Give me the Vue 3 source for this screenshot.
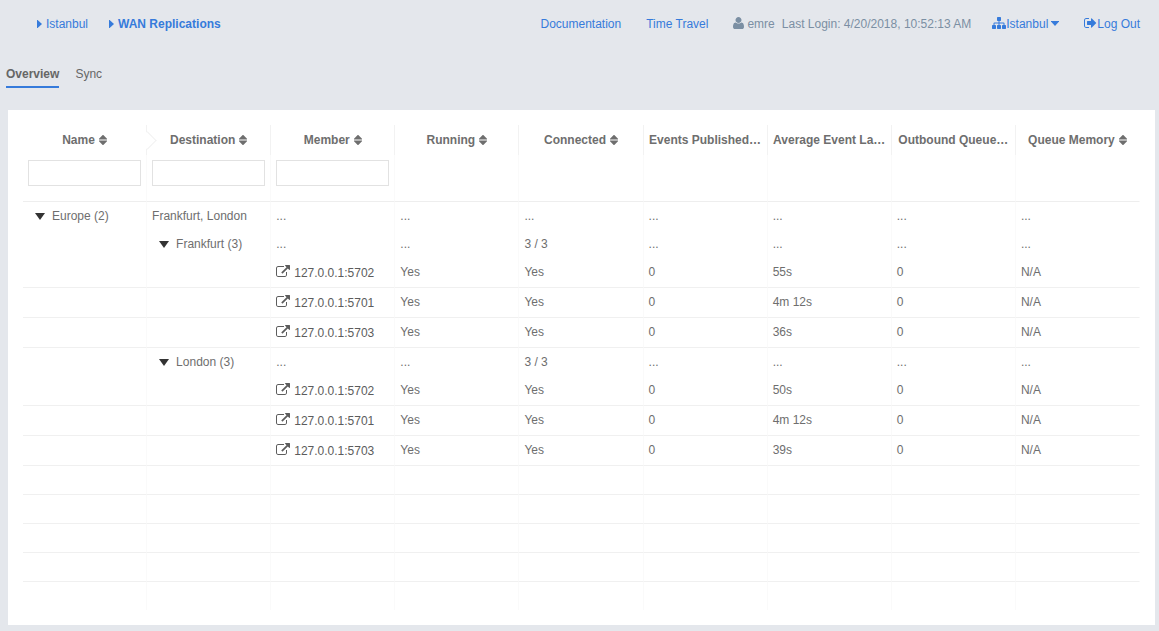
<script setup>
import { ref } from 'vue'

const columns = [
  { key: 'name', label: 'Name', sort: true, filter: true, pivot: true },
  { key: 'destination', label: 'Destination', sort: true, filter: true },
  { key: 'member', label: 'Member', sort: true, filter: true },
  { key: 'running', label: 'Running', sort: true },
  { key: 'connected', label: 'Connected', sort: true },
  { key: 'events', label: 'Events Published…' },
  { key: 'latency', label: 'Average Event La…' },
  { key: 'queue', label: 'Outbound Queue…' },
  { key: 'memory', label: 'Queue Memory', sort: true }
]

const filters = ref({ name: '', destination: '', member: '' })

const dots = '...'
const group = (destination) => ({
  kind: 'group',
  expand: 'destination',
  cells: ['', destination, dots, dots, '3 / 3', dots, dots, dots, dots]
})
const leaf = (member, latency) => ({
  kind: 'leaf',
  cells: ['', '', member, 'Yes', 'Yes', '0', latency, '0', 'N/A']
})

const rows = [
  {
    kind: 'group',
    expand: 'name',
    cells: ['Europe (2)', 'Frankfurt, London', dots, dots, dots, dots, dots, dots, dots]
  },
  group('Frankfurt (3)'),
  leaf('127.0.0.1:5702', '55s'),
  leaf('127.0.0.1:5701', '4m 12s'),
  leaf('127.0.0.1:5703', '36s'),
  group('London (3)'),
  leaf('127.0.0.1:5702', '50s'),
  leaf('127.0.0.1:5701', '4m 12s'),
  leaf('127.0.0.1:5703', '39s')
]
const padRows = 5
</script>

<template>
  <div class="page">
    <header class="topbar">
      <nav class="crumbs" aria-label="Breadcrumb">
        <a href="#" class="crumb">
          <svg class="caret-right" viewBox="0 0 5 8" aria-hidden="true"><path d="M0 0h.6L5 4 .6 8H0z" /></svg>
          <span>Istanbul</span>
        </a>
        <a href="#" class="crumb current">
          <svg class="caret-right" viewBox="0 0 5 8" aria-hidden="true"><path d="M0 0h.6L5 4 .6 8H0z" /></svg>
          <span>WAN Replications</span>
        </a>
      </nav>
      <nav class="tools" aria-label="Account">
        <a href="#">Documentation</a>
        <a href="#">Time Travel</a>
        <div class="user">
          <svg class="icon-user" viewBox="192 0 1408 1792" aria-hidden="true">
            <path d="M1600 1405q0 120-73 189.5t-194 69.5h-874q-121 0-194-69.5t-73-189.5q0-53 3.5-103.5t14-109 26.5-108.5 43-97.5 62-81 85.5-53.5 111.5-20q9 0 42 21.5t74.5 48 108 48 133.5 21.5 133.5-21.5 108-48 74.5-48 42-21.5q61 0 111.5 20t85.5 53.5 62 81 43 97.5 26.5 108.5 14 109 3.5 103.5zm-320-893q0 159-112.5 271.5t-271.5 112.5-271.5-112.5-112.5-271.5 112.5-271.5 271.5-112.5 271.5 112.5 112.5 271.5z" />
          </svg>
          <span>emre</span>
          <span class="login">Last Login: 4/20/2018, 10:52:13 AM</span>
        </div>
        <a href="#" class="cluster">
          <svg class="icon" viewBox="0 0 1792 1792" aria-hidden="true">
            <path d="M1792 1248v320q0 40-28 68t-68 28h-320q-40 0-68-28t-28-68v-320q0-40 28-68t68-28h96v-192h-512v192h96q40 0 68 28t28 68v320q0 40-28 68t-68 28h-320q-40 0-68-28t-28-68v-320q0-40 28-68t68-28h96v-192h-512v192h96q40 0 68 28t28 68v320q0 40-28 68t-68 28h-320q-40 0-68-28t-28-68v-320q0-40 28-68t68-28h96v-192q0-52 38-90t90-38h512v-192h-96q-40 0-68-28t-28-68v-320q0-40 28-68t68-28h320q40 0 68 28t28 68v320q0 40-28 68t-68 28h-96v192h512q52 0 90 38t38 90v192h96q40 0 68 28t28 68z" />
          </svg>
          <span>Istanbul</span>
          <svg class="caret-down" viewBox="0 0 8 5" aria-hidden="true"><path d="M0 0h8v.6L4 5 0 .6z" /></svg>
        </a>
        <a href="#" class="logout">
          <svg class="icon-out" viewBox="0 0 1664 1792" aria-hidden="true">
            <path d="M640 1440q0 4 1 20t.5 26.5-3 23.5-10 19.5-20.5 6.5h-320q-119 0-203.5-84.5t-84.5-203.5v-704q0-119 84.5-203.5t203.5-84.5h320q13 0 22.5 9.5t9.5 22.5q0 4 1 20t.5 26.5-3 23.5-10 19.5-20.5 6.5h-320q-66 0-113 47t-47 113v704q0 66 47 113t113 47h312l11.5 1 11.5 3 8 5.5 7 9 2 13.5zm928-544q0 26-19 45l-544 544q-19 19-45 19t-45-19-19-45v-288h-448q-26 0-45-19t-19-45v-384q0-26 19-45t45-19h448v-288q0-26 19-45t45-19 45 19l544 544q19 19 19 45z" />
          </svg>
          <span>Log Out</span>
        </a>
      </nav>
    </header>

    <nav class="tabs" aria-label="Views">
      <a href="#" class="tab active">Overview</a>
      <a href="#" class="tab">Sync</a>
    </nav>

    <main class="panel">
      <table class="grid">
        <thead>
          <tr class="heads">
            <th v-for="col in columns" :key="col.key" scope="col" :class="{ pivot: col.pivot }">
              <button type="button" class="sort">
                <span>{{ col.label }}</span>
                <svg v-if="col.sort" class="sort-icon" viewBox="0 0 8 10" aria-hidden="true">
                  <path d="M3.7 0h.6L8 3.8v.7H0v-.7zM0 5.5h8v.7L4.3 10h-.6L0 6.2z" />
                </svg>
              </button>
            </th>
          </tr>
          <tr class="filters">
            <td v-for="col in columns" :key="col.key">
              <input
                v-if="col.filter"
                v-model="filters[col.key]"
                type="text"
                :aria-label="'Filter ' + col.label"
              />
            </td>
          </tr>
        </thead>
        <tbody>
          <tr v-for="(row, r) in rows" :key="r" :class="row.kind">
            <td v-for="(cell, c) in row.cells" :key="c">
              <button v-if="row.expand === columns[c].key" type="button" class="toggle">
                <svg class="toggle-icon" viewBox="0 0 10 7" aria-hidden="true"><path d="M0 0h10L5 7z" /></svg>
                <span>{{ cell }}</span>
              </button>
              <a v-else-if="row.kind === 'leaf' && c === 2" href="#" class="member">
                <svg class="icon" viewBox="0 0 1792 1792" aria-hidden="true">
                  <path d="M1408 928v320q0 119-84.5 203.5t-203.5 84.5h-832q-119 0-203.5-84.5t-84.5-203.5v-832q0-119 84.5-203.5t203.5-84.5h704q14 0 23 9t9 23v64q0 14-9 23t-23 9h-704q-66 0-113 47t-47 113v832q0 66 47 113t113 47h832q66 0 113-47t47-113v-320q0-14 9-23t23-9h64q14 0 23 9t9 23zm384-864v512q0 26-19 45t-45 19-45-19l-176-176-652 652q-10 10-23 10t-23-10l-114-114q-10-10-10-23t10-23l652-652-176-176q-19-19-19-45t19-45 45-19h512q26 0 45 19t19 45z" />
                </svg>
                <span>{{ cell }}</span>
              </a>
              <template v-else>{{ cell }}</template>
            </td>
          </tr>
          <tr v-for="n in padRows" :key="'pad' + n" class="pad">
            <td v-for="col in columns" :key="col.key"></td>
          </tr>
        </tbody>
      </table>
    </main>
  </div>
</template>

<style>
body {
  margin: 0;
  background: #e4e7ec;
}
</style>

<style scoped>
.page {
  font: 12px/16px "Liberation Sans", Arial, sans-serif;
  color: #6e6e6e;
  padding-bottom: 6px;
}
a {
  color: #367bdb;
  text-decoration: none;
}
svg {
  fill: currentColor;
  flex: none;
  display: block;
}
button {
  font: inherit;
  color: inherit;
  background: none;
  border: 0;
  padding: 0;
  cursor: pointer;
}
.topbar {
  display: flex;
  justify-content: space-between;
  align-items: center;
  height: 48px;
  padding: 0 19px 0 37px;
  white-space: nowrap;
}
.crumbs,
.tools,
.user,
.crumb,
.cluster,
.logout {
  display: flex;
  align-items: center;
}
.crumbs {
  gap: 21px;
}
.crumb {
  gap: 4px;
}
.current {
  font-weight: bold;
}
.caret-right {
  width: 5px;
  height: 8px;
}
.tools {
  gap: 25px;
}
.user {
  color: #7b8fa3;
  gap: 3px;
  margin-right: -4px;
}
.login {
  margin-left: 4px;
}
.icon {
  width: 14px;
  height: 14px;
}
.icon-user {
  width: 11px;
  height: 14px;
}
.icon-out {
  width: 13px;
  height: 14px;
}
.tools svg {
  margin-bottom: 2px;
}
.caret-down {
  width: 8px;
  height: 5px;
  margin-left: 3px;
}
.tabs {
  display: flex;
  gap: 16px;
  padding: 18px 6px 0;
}
.tab {
  color: #666;
  padding-bottom: 4px;
  border-bottom: 2px solid transparent;
}
.active {
  font-weight: bold;
  border-color: #367bdb;
}
.panel {
  background: #fff;
  margin: 22px 4px 0 8px;
  padding: 15px;
}
.grid {
  width: 100%;
  table-layout: fixed;
  border-collapse: separate;
  border-spacing: 0;
}
.grid th,
.grid td {
  box-sizing: border-box;
  padding: 0 5px;
  text-align: left;
  white-space: nowrap;
  border-right: 1px solid #fafafa;
}
.grid th {
  height: 30px;
  border-right-color: #f2f2f2;
  position: relative;
}
.grid th:last-child,
.grid td:last-child {
  border-right-color: transparent;
}
.pivot::after {
  content: "";
  position: absolute;
  box-sizing: border-box;
  width: 13px;
  height: 13px;
  top: 9px;
  right: -8px;
  background: #fff;
  border: 1px solid #f2f2f2;
  border-left: 0;
  border-bottom: 0;
  transform: rotate(45deg);
}
.sort {
  display: flex;
  justify-content: center;
  align-items: center;
  gap: 4px;
  width: 100%;
  font-weight: bold;
}
.sort-icon {
  width: 8px;
  height: 10px;
}
.grid .filters td {
  height: 47px;
  padding-top: 5px;
  vertical-align: top;
  border-bottom: 1px solid #eee;
}
.filters input {
  box-sizing: border-box;
  display: block;
  width: 100%;
  height: 26px;
  padding: 4px 8px;
  font: inherit;
  color: inherit;
  background: #fff;
  border: 1px solid #e2e2e2;
  border-radius: 0;
}
.group td {
  height: 28px;
}
.grid .leaf td {
  height: 30px;
  padding-bottom: 2px;
  border-bottom: 1px solid #f0f0f0;
}
.grid .pad td {
  height: 29px;
  border-bottom: 1px solid #f0f0f0;
}
.grid .pad:last-child td {
  height: 28px;
  border-bottom: 0;
}
.toggle {
  display: flex;
  align-items: center;
  gap: 7px;
  padding-left: 7px;
}
.toggle-icon {
  width: 10px;
  height: 7px;
  fill: #333;
}
.member {
  display: flex;
  align-items: center;
  gap: 4px;
  color: #5c5c5c;
}
.member span {
  padding-top: 2px;
}
</style>
